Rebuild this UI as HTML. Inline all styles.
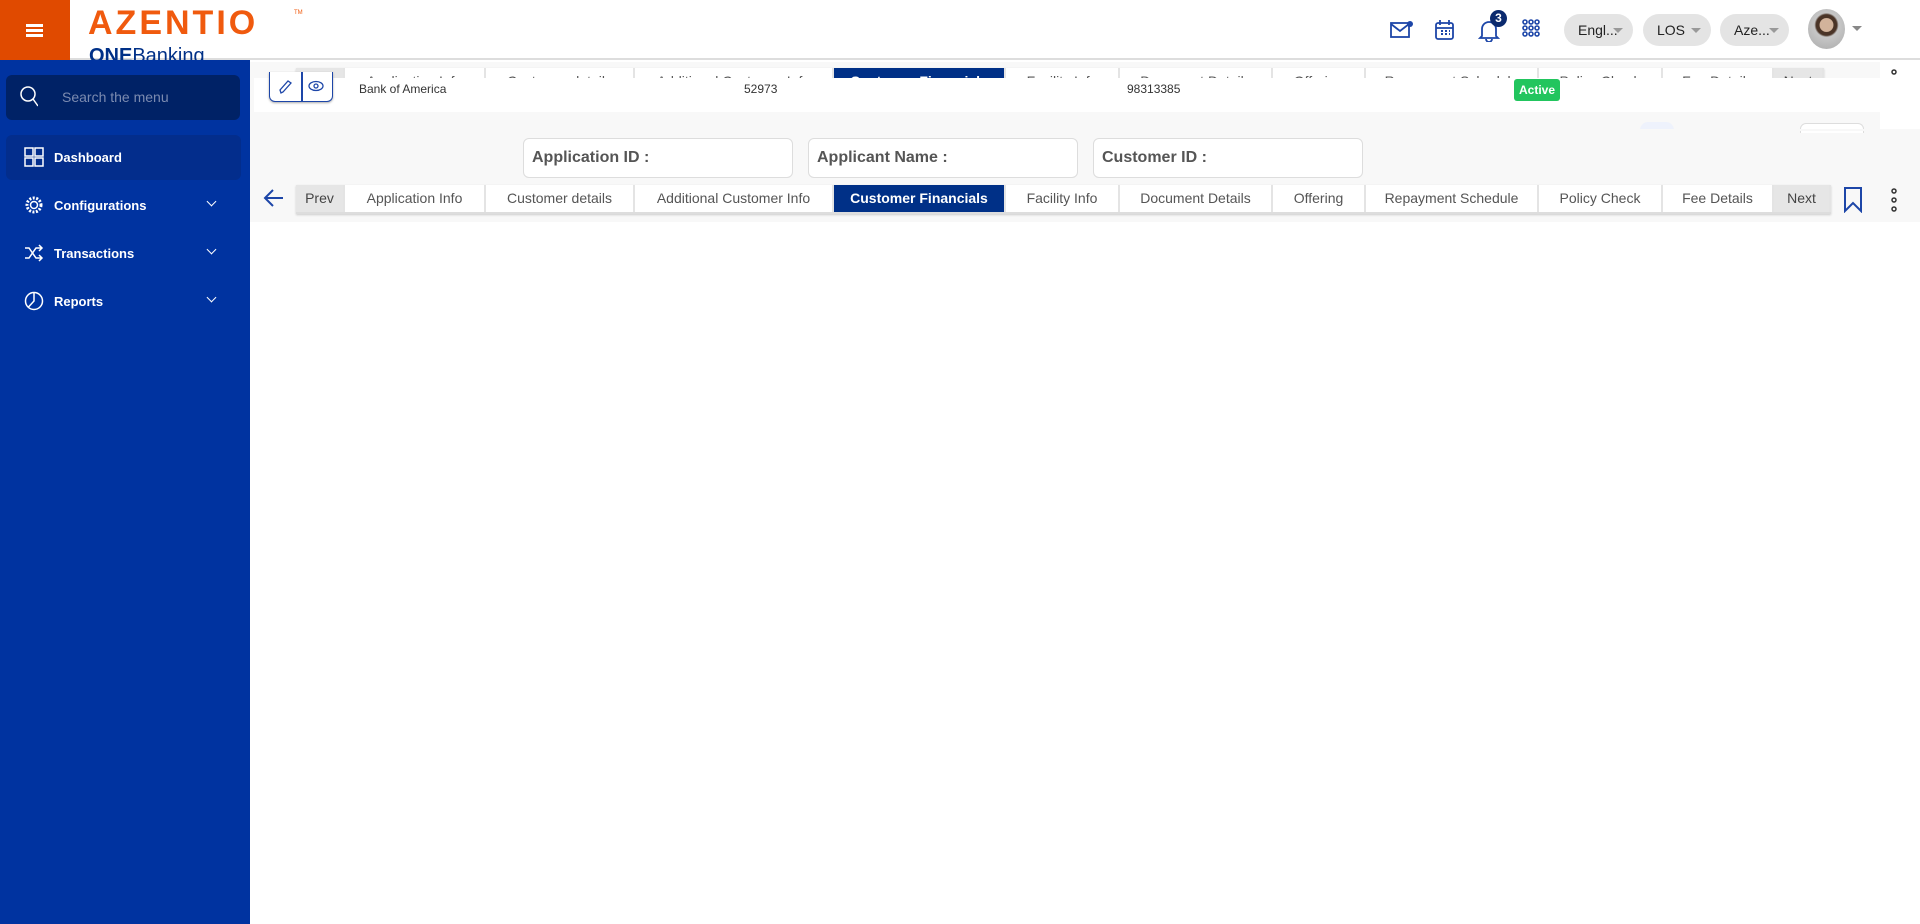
<!DOCTYPE html>
<html><head><style>
*{box-sizing:border-box;margin:0;padding:0}
body{width:1920px;height:924px;overflow:hidden;background:#fff;font-family:"Liberation Sans",sans-serif;position:relative}
.abs{position:absolute}
.tabs{position:absolute;left:296px;height:29px;display:flex;border-bottom:2px solid #ddd;box-shadow:0 1px 2px #ccc}
.tabs div{height:27px;line-height:27px;font-size:14px;color:#555;text-align:center;border-right:2px solid #e4e4e4;background:#fff}
.tabs .g{background:#e6e6e6;color:#444}
.tabs .a{background:#003087;color:#fff;font-weight:bold}
.inp{position:absolute;top:138px;width:270px;height:40px;border:1px solid #ddd;border-radius:6px;background:#fff;font-size:16px;font-weight:bold;color:#555;padding:10px 8px}
.pill{position:absolute;top:14px;height:32px;border-radius:16px;background:#e4e4e4;font-size:14px;color:#222;line-height:32px;padding-left:14px}
.pill:after{content:"";position:absolute;right:10px;top:14px;border:5px solid transparent;border-top-color:#999}
.nav{position:absolute;left:24px;color:#fff;font-size:13px;font-weight:bold;display:flex;align-items:center;gap:10px}
.chev{position:absolute;left:208px;width:7px;height:7px;border-right:1.5px solid #fff;border-bottom:1.5px solid #fff;transform:rotate(45deg)}
</style></head><body>
<div class="abs" style="left:0;top:0;width:1920px;height:60px;background:#fff;border-bottom:2px solid #ddd"></div>
<div class="abs" style="left:0;top:0;width:70px;height:60px;background:#e04a00"></div>
<div class="abs" style="left:26px;top:24px;width:17px;height:13px;border-top:3px solid #fff;border-bottom:3px solid #fff"></div>
<div class="abs" style="left:26px;top:29px;width:17px;height:3px;background:#fff"></div>
<div class="abs" style="left:88px;top:4px;font-size:34px;font-weight:900;color:#f05a0e;letter-spacing:3px">AZENTIO</div>
<div class="abs" style="left:294px;top:10px;font-size:6px;color:#f05a0e">TM</div>
<div class="abs" style="left:89px;top:44px;font-size:20px;color:#003087;height:16px;overflow:hidden;line-height:24px"><b>ONE</b>Banking</div>
<svg class="abs" style="left:1390px;top:20px" width="24" height="20" viewBox="0 0 24 20"><rect x="1" y="3" width="18" height="14" fill="none" stroke="#1d46a8" stroke-width="1.8"/><path d="M1 4l9 7 9-7" fill="none" stroke="#1d46a8" stroke-width="1.8"/><circle cx="20" cy="4" r="3" fill="#1d46a8"/></svg>
<svg class="abs" style="left:1434px;top:19px" width="22" height="22" viewBox="0 0 22 22"><rect x="2" y="4" width="17" height="16" rx="2" fill="none" stroke="#1d46a8" stroke-width="1.8"/><path d="M2 9h17M6 1v5M15 1v5" stroke="#1d46a8" stroke-width="1.8"/><path d="M7 12h2M11 12h2M15 12h1M7 15h2M11 15h2M15 15h1" stroke="#1d46a8" stroke-width="2"/></svg>
<svg class="abs" style="left:1478px;top:18px" width="22" height="24" viewBox="0 0 22 24"><path d="M4 18V11a7 7 0 0 1 14 0v7l2 2H2z M8 21a3 3 0 0 0 6 0" fill="none" stroke="#1d46a8" stroke-width="1.8"/></svg>
<div class="abs" style="left:1490px;top:10px;width:17px;height:17px;border-radius:50%;background:#0b2a6e;color:#fff;font-size:12px;font-weight:bold;text-align:center;line-height:17px">3</div>
<svg class="abs" style="left:1522px;top:19px" width="18" height="22" viewBox="0 0 18 22"><g fill="none" stroke="#1d46a8" stroke-width="1.6"><circle cx="3" cy="3" r="2"/><circle cx="9" cy="3" r="2"/><circle cx="15" cy="3" r="2"/><circle cx="3" cy="9" r="2"/><circle cx="9" cy="9" r="2"/><circle cx="15" cy="9" r="2"/><circle cx="3" cy="15" r="2"/><circle cx="9" cy="15" r="2"/><circle cx="15" cy="15" r="2"/></g></svg>
<div class="pill" style="left:1564px;width:69px">Engl...</div>
<div class="pill" style="left:1643px;width:68px">LOS</div>
<div class="pill" style="left:1720px;width:69px">Aze...</div>
<div class="abs" style="left:1808px;top:9px;width:37px;height:40px;border-radius:50%;background:radial-gradient(circle at 50% 40%,#d2b39b 0 22%,#4a3427 24% 34%,#c7c7c7 40%,#a9a9a9 100%)"></div>
<div class="abs" style="left:1852px;top:26px;border:5px solid transparent;border-top-color:#888"></div>
<div class="abs" style="left:0;top:60px;width:250px;height:864px;background:#0033a0"></div>
<div class="abs" style="left:6px;top:75px;width:234px;height:45px;border-radius:6px;background:#002266"></div>
<svg class="abs" style="left:20px;top:86px" width="18" height="22" viewBox="0 0 18 22"><circle cx="8" cy="8" r="7" fill="none" stroke="#fff" stroke-width="1.5"/><path d="M13 13l5 7" stroke="#fff" stroke-width="1.5"/></svg>
<div class="abs" style="left:62px;top:89px;font-size:14px;color:#7b8bb0">Search the menu</div>
<div class="abs" style="left:6px;top:135px;width:235px;height:45px;border-radius:6px;background:#032d8c"></div>
<div class="nav" style="top:146px"><svg width="20" height="22" viewBox="0 0 20 22"><g fill="none" stroke="#fff" stroke-width="1.5"><rect x="1" y="2" width="8" height="8"/><rect x="11" y="2" width="8" height="8"/><rect x="1" y="12" width="8" height="8"/><rect x="11" y="12" width="8" height="8"/></g></svg>Dashboard</div>
<div class="nav" style="top:195px"><svg width="20" height="20" viewBox="0 0 20 20"><circle cx="10" cy="10" r="7" fill="none" stroke="#fff" stroke-width="3" stroke-dasharray="2 1.5"/><circle cx="10" cy="10" r="3.5" fill="none" stroke="#fff" stroke-width="1.5"/></svg>Configurations</div>
<div class="chev" style="top:198px"></div>
<div class="nav" style="top:243px"><svg width="20" height="20" viewBox="0 0 20 20"><path d="M1 5h4l7 10h6M1 15h4l7-10h6M15 2l3 3-3 3M15 12l3 3-3 3" fill="none" stroke="#fff" stroke-width="1.5"/></svg>Transactions</div>
<div class="chev" style="top:246px"></div>
<div class="nav" style="top:290px"><svg width="20" height="22" viewBox="0 0 20 22"><circle cx="10" cy="11" r="8.5" fill="none" stroke="#fff" stroke-width="1.5"/><path d="M10 2.5v8.5l-5.5 6" fill="none" stroke="#fff" stroke-width="1.5"/></svg>Reports</div>
<div class="chev" style="top:294px"></div>
<div class="abs" style="left:250px;top:62px;width:1670px;height:160px;background:#f8f8f8"></div>
<div class="abs" style="left:250px;top:62px;width:1670px;height:16px;overflow:hidden">
 <div class="tabs" style="top:6px;left:46px">
 <div class="g" style="width:49px">Prev</div><div style="width:141px">Application Info</div><div style="width:149px">Customer details</div><div style="width:199px">Additional Customer Info</div><div class="a" style="width:172px">Customer Financials</div><div style="width:114px">Facility Info</div><div style="width:153px">Document Details</div><div style="width:93px">Offering</div><div style="width:173px">Repayment Schedule</div><div style="width:124px">Policy Check</div><div style="width:111px">Fee Details</div><div class="g" style="width:50px">Next</div></div>
</div>
<div class="abs" style="left:254px;top:78px;width:1643px;height:34px;background:#fff"></div>
<div class="abs" style="left:269px;top:72px;width:64px;height:30px;border:1.5px solid #1d46a8;border-top:none;border-radius:0 0 6px 6px;background:#fff;box-shadow:0 1px 2px #aaa"></div>
<div class="abs" style="left:301px;top:72px;width:1.5px;height:30px;background:#1d46a8"></div>
<svg class="abs" style="left:278px;top:79px" width="14" height="16" viewBox="0 0 14 16"><path d="M3 14l-1 -3 8-9 3 2-8 9z" fill="none" stroke="#1d46a8" stroke-width="1.3"/></svg>
<svg class="abs" style="left:307px;top:80px" width="18" height="12" viewBox="0 0 18 12"><ellipse cx="9" cy="6" rx="7" ry="4.5" fill="none" stroke="#1d46a8" stroke-width="1.3"/><circle cx="9" cy="6" r="2" fill="none" stroke="#1d46a8" stroke-width="1.3"/></svg>
<div class="abs" style="left:359px;top:82px;font-size:12px;color:#333">Bank of America</div>
<div class="abs" style="left:744px;top:82px;font-size:12px;color:#333">52973</div>
<div class="abs" style="left:1127px;top:82px;font-size:12px;color:#333">98313385</div>
<div class="abs" style="left:1514px;top:79px;width:46px;height:22px;border-radius:3px;background:#22c55e;color:#fff;font-size:12px;font-weight:bold;text-align:center;line-height:22px">Active</div>
<div class="abs" style="left:1880px;top:62px;width:40px;height:67px;background:#fff"></div>
<div class="abs" style="left:1800px;top:123px;width:64px;height:10px;border:1px solid #ddd;border-bottom:none;border-radius:6px 6px 0 0;background:#fff"></div>
<div class="abs" style="left:1640px;top:122px;width:34px;height:8px;border-radius:17px 17px 0 0;background:#eef2fc"></div>
<div class="abs" style="left:250px;top:129px;width:1670px;height:2px;background:#f8f8f8"></div>
<div class="inp" style="left:523px">Application ID :</div>
<div class="inp" style="left:808px">Applicant Name :</div>
<div class="inp" style="left:1093px">Customer ID :</div>
<svg class="abs" style="left:263px;top:188px" width="22" height="20" viewBox="0 0 22 20"><path d="M20 10H3M10 2l-8 8 8 8" fill="none" stroke="#1d46a8" stroke-width="2"/></svg>
<div class="tabs" style="top:185px">
 <div class="g" style="width:49px">Prev</div><div style="width:141px">Application Info</div><div style="width:149px">Customer details</div><div style="width:199px">Additional Customer Info</div><div class="a" style="width:172px">Customer Financials</div><div style="width:114px">Facility Info</div><div style="width:153px">Document Details</div><div style="width:93px">Offering</div><div style="width:173px">Repayment Schedule</div><div style="width:124px">Policy Check</div><div style="width:111px">Fee Details</div><div class="g" style="width:57px">Next</div></div>
<svg class="abs" style="left:1843px;top:186px" width="20" height="27" viewBox="0 0 20 27"><path d="M2 2h16v23l-8-8-8 8z" fill="none" stroke="#1d46a8" stroke-width="2"/></svg>
<svg class="abs" style="left:1890px;top:188px" width="8" height="24" viewBox="0 0 8 24"><g fill="none" stroke="#333" stroke-width="1.5"><circle cx="4" cy="3" r="2"/><circle cx="4" cy="12" r="2"/><circle cx="4" cy="21" r="2"/></g></svg>
<svg class="abs" style="left:1890px;top:68px" width="8" height="10" viewBox="0 0 8 10"><circle cx="4" cy="4" r="2" fill="none" stroke="#333" stroke-width="1.5"/></svg>
</body></html>
